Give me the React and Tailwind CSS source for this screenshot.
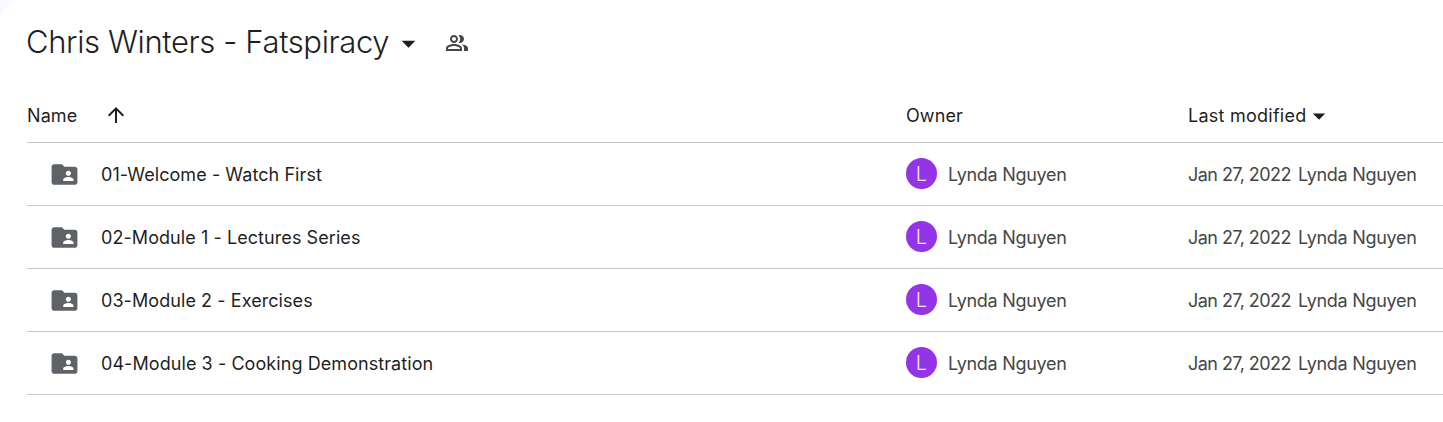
import { MdArrowDropDown, MdArrowUpward, MdFolderShared, MdOutlinePeopleAlt } from 'react-icons/md';

const folders = [
    { id: 1, name: '01-Welcome - Watch First', owner: 'Lynda Nguyen', modified: 'Jan 27, 2022' },
    { id: 2, name: '02-Module 1 - Lectures Series', owner: 'Lynda Nguyen', modified: 'Jan 27, 2022' },
    { id: 3, name: '03-Module 2 - Exercises', owner: 'Lynda Nguyen', modified: 'Jan 27, 2022' },
    { id: 4, name: '04-Module 3 - Cooking Demonstration', owner: 'Lynda Nguyen', modified: 'Jan 27, 2022' },
];

export default function App() {
    return (
        <div className="h-screen overflow-hidden bg-[#f8fafd]">
            <main className="h-full rounded-tl-[22px] bg-white pl-[27px] font-['Inter',sans-serif] text-lg text-[#1f1f1f]">
                {/* Folder title */}
                <header className="flex h-[88px] items-center pb-0.5">
                    <h1 className="-ml-px pb-0.5 text-[31px] font-light whitespace-nowrap tracking-[-0.37px]">Chris Winters - Fatspiracy</h1>
                    <MdArrowDropDown className="ml-[3px] size-[33px] shrink-0" />
                    <MdOutlinePeopleAlt className="ml-5 size-6 shrink-0 text-[#444746]" />
                </header>

                {/* Column headings */}
                <div className="flex h-[55px] items-center border-b border-[#c7c7c7] whitespace-nowrap">
                    <div className="flex w-[879px] items-center">
                        <span className="w-[77px] pt-0.5 tracking-[0.1px]">Name</span>
                        <MdArrowUpward className="size-6" />
                    </div>
                    <div className="w-[283px] pt-0.5 tracking-[0.1px]">Owner</div>
                    <div className="flex items-center">
                        <span className="-ml-px pt-0.5 tracking-[0.25px]">Last modified</span>
                        <MdArrowDropDown className="-ml-0.5 mt-0.5 size-[30px]" />
                    </div>
                </div>

                {folders.map((folder) => (
                    <FolderRow key={folder.id} folder={folder} />
                ))}
            </main>
        </div>
    );
}

function FolderRow({ folder }) {
    return (
        <div className="flex h-[63px] items-center border-b border-[#c7c7c7] whitespace-nowrap">
            <div className="flex w-[879px] items-center">
                <MdFolderShared className="ml-[21.5px] size-[31px] text-[#5f6368]" />
                <span className="ml-[21.5px] pt-0.5 tracking-[0.07px]">{folder.name}</span>
            </div>
            <div className="flex w-[282px] items-center text-[#444746]">
                <span className="mb-px flex size-[31px] items-center justify-center rounded-full bg-[#9334e6] text-xl font-light text-[#f3e4ff]">
                    {folder.owner[0]}
                </span>
                <span className="ml-[11px] pt-0.5 tracking-[-0.28px]">{folder.owner}</span>
            </div>
            <div className="flex pt-0.5 text-[#444746]">
                <span className="w-[110px] tracking-[-0.55px]">{folder.modified}</span>
                <span className="tracking-[-0.28px]">{folder.owner}</span>
            </div>
        </div>
    );
}
